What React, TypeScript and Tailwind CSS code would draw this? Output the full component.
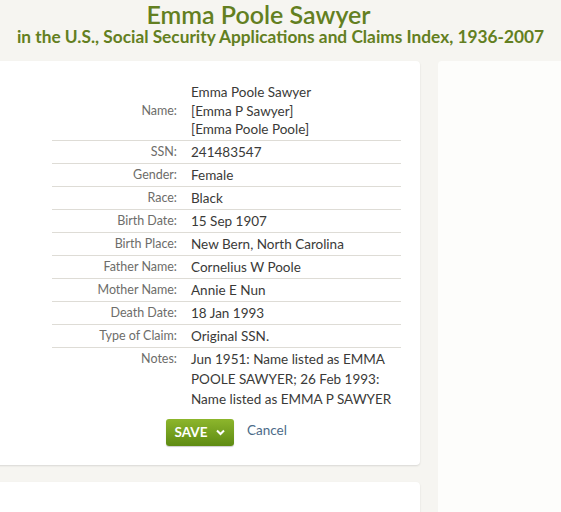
const rows: { label: string; value: string[] }[] = [
  { label: "Name:", value: ["Emma Poole Sawyer", "[Emma P Sawyer]", "[Emma Poole Poole]"] },
  { label: "SSN:", value: ["241483547"] },
  { label: "Gender:", value: ["Female"] },
  { label: "Race:", value: ["Black"] },
  { label: "Birth Date:", value: ["15 Sep 1907"] },
  { label: "Birth Place:", value: ["New Bern, North Carolina"] },
  { label: "Father Name:", value: ["Cornelius W Poole"] },
  { label: "Mother Name:", value: ["Annie E Nun"] },
  { label: "Death Date:", value: ["18 Jan 1993"] },
  { label: "Type of Claim:", value: ["Original SSN."] },
  {
    label: "Notes:",
    value: ["Jun 1951: Name listed as EMMA", "POOLE SAWYER; 26 Feb 1993:", "Name listed as EMMA P SAWYER"],
  },
];

function FactRow({ label, value, last }: { label: string; value: string[]; last: boolean }) {
  const multi = value.length > 1;
  return (
    <div
      className={`flex ${last ? "" : "border-b border-[#dedcd6]"} ${
        multi && !last ? "pt-[2px] pb-px leading-[18.5px]" : "py-px leading-[20px]"
      }`}
    >
      <div
        className={`w-[125px] shrink-0 text-right text-[12.5px] text-[#6d6d6a] ${
          multi && !last ? "self-center" : ""
        }`}
      >
        {label}
      </div>
      <div className="pl-[14px] text-[13.5px] text-[#3a3a38]">
        {value.map((v) => (
          <div key={v}>{v}</div>
        ))}
      </div>
    </div>
  );
}

export default function App() {
  return (
    <div
      className="w-[561px] h-[512px] overflow-hidden bg-[#f6f5f1]"
      style={{ fontFamily: "Lato, 'Open Sans', sans-serif" }}
    >
      <header className="text-center text-[#637f21]">
        <h1 className="pr-[44px] text-[25px] font-semibold leading-[28px]">Emma Poole Sawyer</h1>
        <p className="text-[17.3px] font-bold leading-[20px] -mt-px">
          in the U.S., Social Security Applications and Claims Index, 1936-2007
        </p>
      </header>

      <div className="flex gap-[18px] mt-[14px]">
        <div className="-ml-5 w-[440px] shrink-0 flex flex-col gap-[17px]">
          <section className="bg-white rounded-[4px] shadow-[0_1px_2px_rgba(0,0,0,0.12)] pt-[20px] pb-[19px]">
            <div className="ml-[72px] w-[349px]">
              {rows.map((r, i) => (
                <FactRow key={r.label} label={r.label} value={r.value} last={i === rows.length - 1} />
              ))}
            </div>
            <div className="flex items-center gap-[13px] ml-[186px] mt-[9px]">
              <button className="h-[27px] w-[68px] flex items-center justify-center gap-[9px] rounded-[3px] bg-gradient-to-b from-[#8db62c] to-[#5e8b12] text-white text-[13.5px] font-bold shadow-[0_1px_1px_rgba(0,0,0,0.2)]">
                SAVE
                <svg width="9" height="7" viewBox="0 0 9 7" fill="none">
                  <path d="M1 1.5 L4.5 5 L8 1.5" stroke="white" strokeWidth="2" />
                </svg>
              </button>
              <a className="text-[13.5px] text-[#4c6b88] -mt-[3px]">Cancel</a>
            </div>
          </section>
          <section className="bg-white rounded-[4px] shadow-[0_1px_2px_rgba(0,0,0,0.12)] h-[60px]" />
        </div>
        <aside className="w-[140px] shrink-0 bg-[#fdfdfb] rounded-[4px] h-[460px]" />
      </div>
    </div>
  );
}
